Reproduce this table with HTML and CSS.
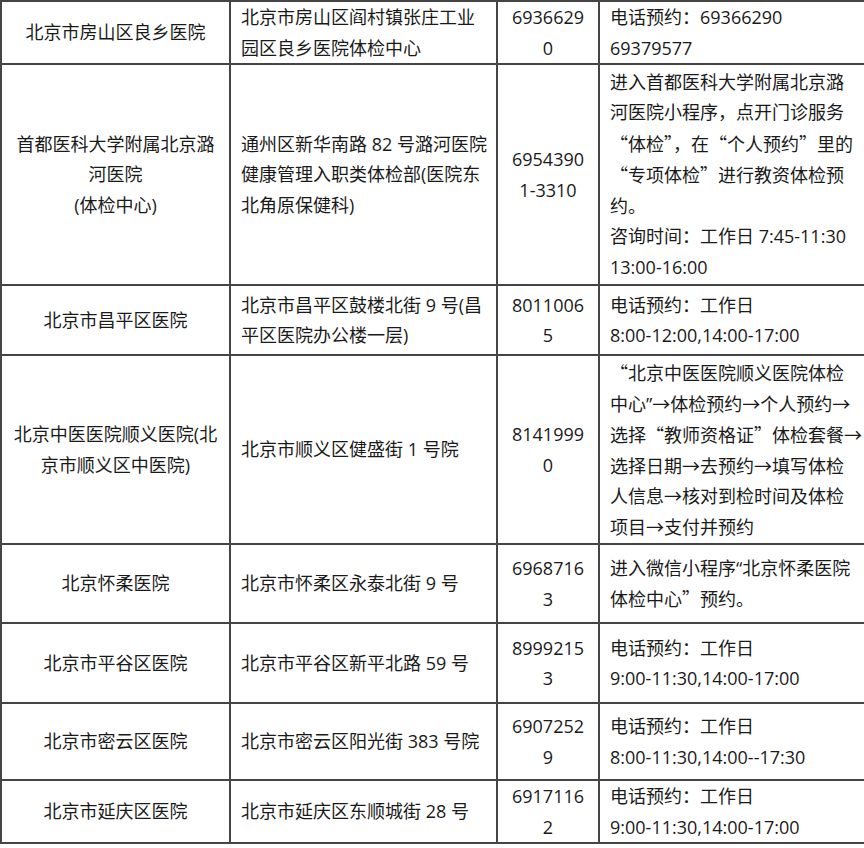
FILE: index.html
```html
<!DOCTYPE html>
<html lang="zh-CN">
<head>
<meta charset="utf-8">
<title>体检医院列表</title>
<link rel="stylesheet" href="styles.css">
</head>
<body>
<table class="list">
  <colgroup>
    <col class="c-name">
    <col class="c-addr">
    <col class="c-tel">
    <col class="c-note">
  </colgroup>
  <tbody>
    <tr class="r1">
      <td class="name">北京市房山区良乡医院</td>
      <td class="addr">北京市房山区阎村镇张庄工业<br>园区良乡医院体检中心</td>
      <td class="tel">6936629<br>0</td>
      <td class="note">电话预约：69366290<br>69379577</td>
    </tr>
    <tr class="r2">
      <td class="name">首都医科大学附属北京潞<br>河医院<br>(体检中心)</td>
      <td class="addr">通州区新华南路 82 号潞河医院<br>健康管理入职类体检部(医院东<br>北角原保健科)</td>
      <td class="tel">6954390<br>1-3310</td>
      <td class="note">进入首都医科大学附属北京潞<br>河医院小程序，点开门诊服务<br><span class="q">“</span>体检<span class="q">”</span>，在<span class="q">“</span>个人预约<span class="q">”</span>里的<br><span class="q">“</span>专项体检<span class="q">”</span>进行教资体检预<br>约。<br>咨询时间：工作日 7:45-11:30<br>13:00-16:00</td>
    </tr>
    <tr class="r3">
      <td class="name">北京市昌平区医院</td>
      <td class="addr">北京市昌平区鼓楼北街 9 号(昌<br>平区医院办公楼一层)</td>
      <td class="tel">8011006<br>5</td>
      <td class="note">电话预约：工作日<br>8:00-12:00,14:00-17:00</td>
    </tr>
    <tr class="r4">
      <td class="name">北京中医医院顺义医院(北<br>京市顺义区中医院)</td>
      <td class="addr">北京市顺义区健盛街 1 号院</td>
      <td class="tel">8141999<br>0</td>
      <td class="note"><span class="q">“</span>北京中医医院顺义医院体检<br>中心”→体检预约→个人预约→<br>选择<span class="q">“</span>教师资格证<span class="q">”</span>体检套餐→<br>选择日期→去预约→填写体检<br>人信息→核对到检时间及体检<br>项目→支付并预约</td>
    </tr>
    <tr class="r5">
      <td class="name">北京怀柔医院</td>
      <td class="addr">北京市怀柔区永泰北街 9 号</td>
      <td class="tel">6968716<br>3</td>
      <td class="note">进入微信小程序“北京怀柔医院<br>体检中心<span class="q">”</span>预约。</td>
    </tr>
    <tr class="r6">
      <td class="name">北京市平谷区医院</td>
      <td class="addr">北京市平谷区新平北路 59 号</td>
      <td class="tel">8999215<br>3</td>
      <td class="note">电话预约：工作日<br>9:00-11:30,14:00-17:00</td>
    </tr>
    <tr class="r7">
      <td class="name">北京市密云区医院</td>
      <td class="addr">北京市密云区阳光街 383 号院</td>
      <td class="tel">6907252<br>9</td>
      <td class="note">电话预约：工作日<br>8:00-11:30,14:00--17:30</td>
    </tr>
    <tr class="r8">
      <td class="name">北京市延庆区医院</td>
      <td class="addr">北京市延庆区东顺城街 28 号</td>
      <td class="tel">6917116<br>2</td>
      <td class="note">电话预约：工作日<br>9:00-11:30,14:00-17:00</td>
    </tr>
  </tbody>
</table>
</body>
</html>
```
FILE: styles.css
```css
html, body {
  margin: 0;
  padding: 0;
  background: #ffffff;
}

body {
  font-family: "Open Sans", "Noto Sans CJK SC", sans-serif;
  font-size: 18px;
  line-height: 30.5px;
  color: #1a1a1a;
}

.list {
  width: 864px;
  border-collapse: collapse;
  table-layout: fixed;
}

.c-name { width: 229px; }
.c-addr { width: 267px; }
.c-tel  { width: 102px; }
.c-note { width: 266px; }

.list td {
  border: 2px solid #454545;
  padding: 0 8px 0 10px;
  vertical-align: middle;
  white-space: nowrap;
  overflow: hidden;
}

.list td.name,
.list td.tel {
  text-align: center;
  padding: 0 4px;
}

.list td.addr,
.list td.note {
  text-align: left;
}

.q {
  font-family: "Noto Sans CJK SC", sans-serif;
}

.r1 { height: 63px; }
.r2 { height: 221px; }
.r3 { height: 70px; }
.r4 { height: 189px; }
.r5 { height: 79px; }
.r6 { height: 80px; }
.r7 { height: 77px; }
.r8 { height: 63px; }
```
